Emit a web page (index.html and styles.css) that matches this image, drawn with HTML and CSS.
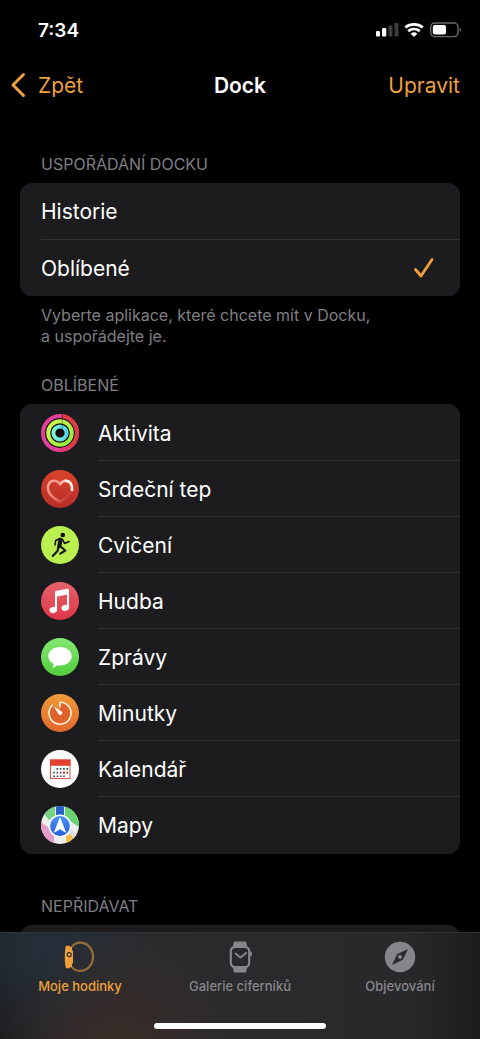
FILE: index.html
```html
<!DOCTYPE html>
<html lang="cs">
<head>
<meta charset="utf-8">
<meta name="viewport" content="width=device-width, initial-scale=1">
<title>Dock</title>
<link rel="stylesheet" href="styles.css">
</head>
<body>
<div class="screen">
  <div class="status">
    <span class="time">7:34</span>
    <svg class="status-icons" width="88" height="20" viewBox="0 0 88 20" aria-hidden="true">
      <g fill="#fff">
        <rect x="2" y="11" width="4" height="5.500" rx="1.300"/>
        <rect x="8" y="8" width="4.300" height="8.500" rx="1.300"/>
      </g>
      <g fill="#3d3d3f">
        <rect x="14.500" y="5.500" width="4" height="11" rx="1.300"/>
        <rect x="20.500" y="3" width="4" height="13.500" rx="1.300"/>
      </g>
      <g fill="none" stroke="#fff" stroke-width="2.700">
        <path d="M31.300 7.400a14 14 0 0 1 17.400 0"/>
        <path d="M34.200 11.100a9 9 0 0 1 11.600 0"/>
      </g>
      <path d="M36.700 13.700a5.200 5.200 0 0 1 6.600 0L40 17z" fill="#fff"/>
      <rect x="56.700" y="3" width="27.300" height="13.600" rx="4" fill="none" stroke="#69696b" stroke-width="1.400"/>
      <rect x="58.800" y="5" width="13.200" height="9.600" rx="2" fill="#fff"/>
      <path d="M85.700 7.500q3 2.300 0 4.600z" fill="#69696b"/>
    </svg>
  </div>
  <header class="navbar">
    <button class="nav-button back" type="button">
      <svg width="16" height="26" viewBox="0 0 16 26" aria-hidden="true"><path d="M13.500 2.500 3 13 13.500 23.500" fill="none" stroke="currentColor" stroke-width="3" stroke-linecap="round" stroke-linejoin="round"/></svg>
      Zpět
    </button>
    <h1 class="title">Dock</h1>
    <button class="nav-button edit" type="button">Upravit</button>
  </header>

  <main class="content">
    <section class="section">
      <h2 class="label" id="order">USPOŘÁDÁNÍ DOCKU</h2>
      <div class="card" role="radiogroup" aria-labelledby="order">
        <label class="option">Historie<input class="check" type="radio" name="order"></label>
        <label class="option">Oblíbené<input class="check" type="radio" name="order" checked>
          <svg class="tick" width="22" height="22" viewBox="0 0 22 22" aria-hidden="true"><path d="M2.500 12.500 8 19 19 2.500" fill="none" stroke="currentColor" stroke-width="2.800" stroke-linecap="round" stroke-linejoin="round"/></svg>
        </label>
      </div>
      <p class="note">Vyberte aplikace, které chcete mít v Docku, <br>a uspořádejte je.</p>
    </section>

    <section class="section apps">
      <h2 class="label">OBLÍBENÉ</h2>
      <ul class="card list">
        <li class="app">
          <svg class="icon" viewBox="0 0 38 38" aria-hidden="true">
            <defs>
              <linearGradient id="gb" x1="0" x2="1" y1="0" y2="1"><stop offset="0" stop-color="#d8fb50"/><stop offset="1" stop-color="#8bea3a"/></linearGradient>
              <linearGradient id="gc" x1="0" x2="1" y1="0" y2="0"><stop offset="0" stop-color="#7cf5d0"/><stop offset="1" stop-color="#56d3ee"/></linearGradient>
            </defs>
            <circle cx="19" cy="19" r="19" fill="#140a10"/>
            <circle cx="19" cy="19" r="17" fill="none" stroke="#e0409a" stroke-width="4"/>
            <path d="M21 2.100A17 17 0 0 1 28 33.400" fill="none" stroke="#e03b40" stroke-width="4"/>
            <path d="M28 33.400a17 17 0 0 1-9 2.600" fill="none" stroke="#e03c72" stroke-width="4"/>
            <circle cx="19" cy="19" r="11.800" fill="none" stroke="url(#gb)" stroke-width="4"/>
            <circle cx="19" cy="19" r="6.600" fill="none" stroke="url(#gc)" stroke-width="4"/>
            <path d="M21.300 0v4M21.300 5.500v4M21.300 10.500v4" stroke="#111" stroke-opacity=".45" stroke-width="1"/>
          </svg>
          Aktivita
        </li>
        <li class="app">
          <svg class="icon" viewBox="0 0 38 38" aria-hidden="true">
            <defs>
              <linearGradient id="gd" x1="0" x2="0" y1="0" y2="1"><stop offset="0" stop-color="#d9432b"/><stop offset="1" stop-color="#b72d28"/></linearGradient>
              <linearGradient id="ge" gradientUnits="userSpaceOnUse" x1="10" x2="28" y1="10" y2="28"><stop offset="0" stop-color="#f4a596"/><stop offset=".7" stop-color="#e9705f"/><stop offset="1" stop-color="#bd3029"/></linearGradient>
            </defs>
            <circle cx="19" cy="19" r="19" fill="url(#gd)"/>
            <path d="M31 20c-1 4.400-5.200 8-10.500 11-1 .5-2 .5-3 0C12.200 28 8 24.400 7.200 20 6.200 14.500 9 10.800 13 10.800c2.600 0 4.600 1.300 6 3.500 1.400-2.200 3.400-3.500 6-3.500" fill="none" stroke="url(#ge)" stroke-width="2.600" stroke-linecap="round"/>
            <path d="M19 14.300c1.400-2.200 3.400-3.500 6-3.500" fill="none" stroke="#f4b3a4" stroke-width="2.600"/>
            <path d="M24.800 10.800c4.200 0 6.800 4 6.200 9.200" fill="none" stroke="#fff0ea" stroke-width="2.700" stroke-linecap="round"/>
          </svg>
          Srdeční tep
        </li>
        <li class="app">
          <svg class="icon" viewBox="0 0 38 38" aria-hidden="true">
            <circle cx="19" cy="19" r="19" fill="#b9f04f"/>
            <circle cx="21.800" cy="9" r="2.300" fill="#111"/>
            <g fill="none" stroke="#111" stroke-linecap="round" stroke-linejoin="round">
              <path d="m19.600 13.700-1.300 6.500" stroke-width="4.200"/>
              <path d="m18.500 12.700-3.800 1.700-.7 4.600M21.700 13.700l1.800 3.800 4.500-2" stroke-width="1.600"/>
              <path d="m19.500 20.500 4.800 4-5 3.200" stroke-width="2.100"/>
              <path d="m17.500 21-1 4-4.800 5" stroke-width="2.100"/>
            </g>
          </svg>
          Cvičení
        </li>
        <li class="app">
          <svg class="icon" viewBox="0 0 38 38" aria-hidden="true">
            <defs><linearGradient id="gf" x1="0" x2="0" y1="0" y2="1"><stop offset="0" stop-color="#e5646c"/><stop offset="1" stop-color="#df3548"/></linearGradient></defs>
            <circle cx="19" cy="19" r="19" fill="url(#gf)"/>
            <path d="M15 10.300v17.200M27 8v17.300" fill="none" stroke="#fff" stroke-width="2"/>
            <path d="M14 10.500q0-1.500 1.500-1.800l11-2q1.500-.2 1.500 1.300v4.300L14 15z" fill="#fff"/>
            <ellipse cx="12.300" cy="28" rx="3.900" ry="3" transform="rotate(-15 12.300 28)" fill="#fff"/>
            <ellipse cx="24.300" cy="25.800" rx="3.900" ry="3" transform="rotate(-15 24.300 25.800)" fill="#fff"/>
          </svg>
          Hudba
        </li>
        <li class="app">
          <svg class="icon" viewBox="0 0 38 38" aria-hidden="true">
            <defs><linearGradient id="gg" x1="0" x2="0" y1="0" y2="1"><stop offset="0" stop-color="#83e972"/><stop offset="1" stop-color="#53cd3c"/></linearGradient></defs>
            <circle cx="19" cy="19" r="19" fill="url(#gg)"/>
            <path d="M19 9c6.600 0 11.700 4 11.700 9.200S25.600 27.500 19 27.500c-1 0-1.900-.1-2.800-.3-1.600 1.500-3.500 2.300-5.200 2.200 1.200-1 1.700-2.200 1.600-3.600-3.300-1.600-5.300-4.400-5.300-7.600C7.300 13 12.400 9 19 9z" fill="#fff"/>
          </svg>
          Zprávy
        </li>
        <li class="app">
          <svg class="icon" viewBox="0 0 38 38" aria-hidden="true">
            <defs><linearGradient id="gh" x1="0" x2="0" y1="0" y2="1"><stop offset="0" stop-color="#ee9c38"/><stop offset="1" stop-color="#e3682d"/></linearGradient></defs>
            <circle cx="19" cy="19" r="19" fill="url(#gh)"/>
            <path d="M19 19V8.500A10.800 10.800 0 1 1 11.300 11.600z" fill="#e1622a"/>
            <path d="M19 13V8.200A11 11 0 1 1 11.300 11.400" fill="none" stroke="#fff0d8" stroke-width="1.600" stroke-linecap="round" stroke-linejoin="round"/>
            <path d="m13.700 13.500 6.800 4.300a1.700 1.700 0 0 1-2.400 2.400z" fill="#fff" stroke="#fff" stroke-width=".8" stroke-linejoin="round"/>
          </svg>
          Minutky
        </li>
        <li class="app">
          <svg class="icon" viewBox="0 0 38 38" aria-hidden="true">
            <circle cx="19" cy="19" r="19" fill="#fff"/>
            <rect x="9.500" y="10" width="19.500" height="18.500" fill="#fff" stroke="#df5248" stroke-width="1"/>
            <path d="M9 9.500h20.500v6.300H9z" fill="#e3402f"/>
            <path d="M15.500 18.900H28M12.300 22.600H28M12.300 26.200H25" stroke="#444" stroke-width="1.600" stroke-dasharray="1.600 1.700"/>
            <rect x="22" y="21.700" width="2" height="2" fill="#e3402f"/>
          </svg>
          Kalendář
        </li>
        <li class="app">
          <svg class="icon" viewBox="0 0 38 38" aria-hidden="true">
            <defs>
              <clipPath id="round"><circle cx="19" cy="19" r="19"/></clipPath>
              <linearGradient id="gi" x1="0" x2="0" y1="0" y2="1"><stop offset="0" stop-color="#4b94f2"/><stop offset="1" stop-color="#275fdc"/></linearGradient>
            </defs>
            <g clip-path="url(#round)">
              <path d="M0 0h38v38H0z" fill="#eeeeee"/>
              <path d="M3 8 12 0h2v12L8 14z" fill="#77d483"/>
              <path d="M24 0h14v21L29 15l-5-4z" fill="#68d36f"/>
              <path d="M0 16 8 22l5 8v8H0z" fill="#e69bcd"/>
              <path d="m29 28 4 4-8 6v-8z" fill="#f1bf43"/>
              <path d="m30 23 8 7-4 3-6-6z" fill="#dedede"/>
              <path d="M15 0h8v12h-8z" fill="#2d62cc"/>
            </g>
            <circle cx="19" cy="20" r="11.600" fill="#f4f6fb"/>
            <circle cx="19" cy="20" r="9.900" fill="url(#gi)"/>
            <path d="m19 12 5.500 14.200-5.500-3.500-5.500 3.500z" fill="#fff" stroke="#fff" stroke-width=".8" stroke-linejoin="round"/>
          </svg>
          Mapy
        </li>
      </ul>
    </section>

    <section class="section rest">
      <h2 class="label">NEPŘIDÁVAT</h2>
      <div class="card empty"></div>
    </section>
  </main>

  <footer class="dockbar">
    <nav class="tabs">
      <a class="tab active" href="#watch" aria-current="page">
        <svg width="32" height="32" viewBox="0 0 32 32" aria-hidden="true">
          <path d="M7.500 6C10 3 12.500 1.700 16 1.700c7.500 0 13 6.300 13 14.100s-5.500 14.100-13 14.100c-3.500 0-6.500-1.400-8.500-4.400" fill="none" stroke="#976d37" stroke-width="2.200"/>
          <path d="M2 4.700h3.300q.5 1.300 2 1.300h.7v3l1 1v12l-1 1v3h-.7q-1.500 0-2 1.300H2q-1.200-3-1.200-11.300T2 4.700z" fill="currentColor"/>
          <circle cx="5.200" cy="13.700" r="2" fill="none" stroke="#2f2c26" stroke-width="1.200"/>
        </svg>
        Moje hodinky
      </a>
      <a class="tab" href="#faces">
        <svg width="32" height="32" viewBox="0 0 32 32" aria-hidden="true">
          <path d="M10 .5h12l1.500 6h-15zM8.500 25.500h15l-1.500 6H10z" fill="currentColor"/>
          <rect x="6.800" y="5.800" width="18.400" height="20.400" rx="4.500" fill="#29292b" stroke="currentColor" stroke-width="2.200"/>
          <rect x="26" y="10.500" width="1.800" height="5" rx=".8" fill="currentColor"/>
          <path d="m11.500 12.500 5 4 5.500-4.500" fill="none" stroke="currentColor" stroke-width="2" stroke-linecap="round" stroke-linejoin="round"/>
        </svg>
        Galerie ciferníků
      </a>
      <a class="tab" href="#discover">
        <svg width="32" height="32" viewBox="0 0 32 32" aria-hidden="true">
          <circle cx="16" cy="16" r="15.200" fill="currentColor"/>
          <path d="m24 8-5.200 10.800L8 24l5.200-10.800z" fill="#29292b"/>
          <circle cx="16" cy="16" r="2" fill="currentColor"/>
        </svg>
        Objevování
      </a>
    </nav>
    <div class="home-bar"></div>
  </footer>
</div>
</body>
</html>
```
FILE: styles.css
```css
* {
  box-sizing: border-box;
}

body {
  margin: 0;
  background: #000;
  color: #fff;
  font-family: Inter, "Liberation Sans", sans-serif;
  font-size: 21px;
}

.screen {
  display: flex;
  flex-direction: column;
  height: 100vh;
}

.status {
  display: flex;
  flex: none;
  align-items: center;
  justify-content: space-between;
  height: 60px;
  padding: 0 18px 0 38px;
}

.time {
  font-size: 19px;
  font-weight: 600;
}

.navbar {
  display: grid;
  flex: none;
  grid-template-columns: 1fr auto 1fr;
  align-items: center;
  height: 50px;
  padding: 0 20px 0 10px;
}

.nav-button {
  display: flex;
  align-items: center;
  gap: 12px;
  padding: 0;
  border: 0;
  background: none;
  color: #ef9f3c;
  font: inherit;
}

.back {
  justify-self: start;
}

.edit {
  justify-self: end;
}

.title {
  margin: 0;
  padding-left: 10px;
  font-size: 21px;
  font-weight: 600;
}

.content {
  flex: 1;
  min-height: 0;
  padding: 44px 20px 0;
  overflow: auto;
  scrollbar-width: none;
}

.label {
  margin: 0 0 8px;
  padding: 0 21px;
  color: #7f7f84;
  font-size: 16px;
  font-weight: 400;
  line-height: 21px;
}

.card {
  margin: 0;
  border-radius: 12px;
  background: #1c1c1e;
  overflow: hidden;
}

.option {
  display: flex;
  align-items: center;
  justify-content: space-between;
  height: 56px;
  margin-left: 21px;
  padding-right: 25px;
}

.option + .option {
  height: 57px;
  border-top: 1px solid #303033;
}

.check {
  width: 0;
  height: 0;
  margin: 0;
  appearance: none;
}

.tick {
  color: #ef9f3c;
}

.note {
  margin: 9px 0 0;
  padding: 0 21px;
  color: #7f7f84;
  font-size: 16px;
  line-height: 21px;
}

.apps {
  margin-top: 28px;
}

.list {
  padding: 1px 0;
  list-style: none;
}

.app {
  display: flex;
  align-items: center;
  gap: 19px;
  height: 56px;
  padding-left: 21px;
  background: linear-gradient(#303033, #303033) 78px 100% / 100% 1px no-repeat;
}

.app:last-child {
  background: none;
}

.icon {
  flex: none;
  width: 38px;
  height: 38px;
}

.rest {
  margin-top: 42px;
}

.empty {
  min-height: 56px;
}

.dockbar {
  display: flex;
  flex: none;
  flex-direction: column;
  align-items: center;
  justify-content: space-between;
  padding: 8px 0 10px;
  border-top: 1px solid #323234;
  background:
    radial-gradient(circle at 25% 115%, #3a2c27 0, transparent 120px),
    radial-gradient(circle at 9% 10%, #242f3a 0, transparent 110px),
    linear-gradient(90deg, #1d1d1e 0, #2b2b2d 18%, #29292b 85%, #1c1c1d 100%);
}

.tabs {
  display: grid;
  grid-template-columns: repeat(3, 1fr);
  align-self: stretch;
}

.tab {
  display: flex;
  flex-direction: column;
  align-items: center;
  gap: 4px;
  color: #86868a;
  font-size: 13px;
  font-weight: 500;
  line-height: 18px;
  text-decoration: none;
}

.active {
  color: #ef9f3c;
}

.home-bar {
  width: 36%;
  height: 6px;
  margin-top: 28px;
  border-radius: 3px;
  background: #fff;
}
```
